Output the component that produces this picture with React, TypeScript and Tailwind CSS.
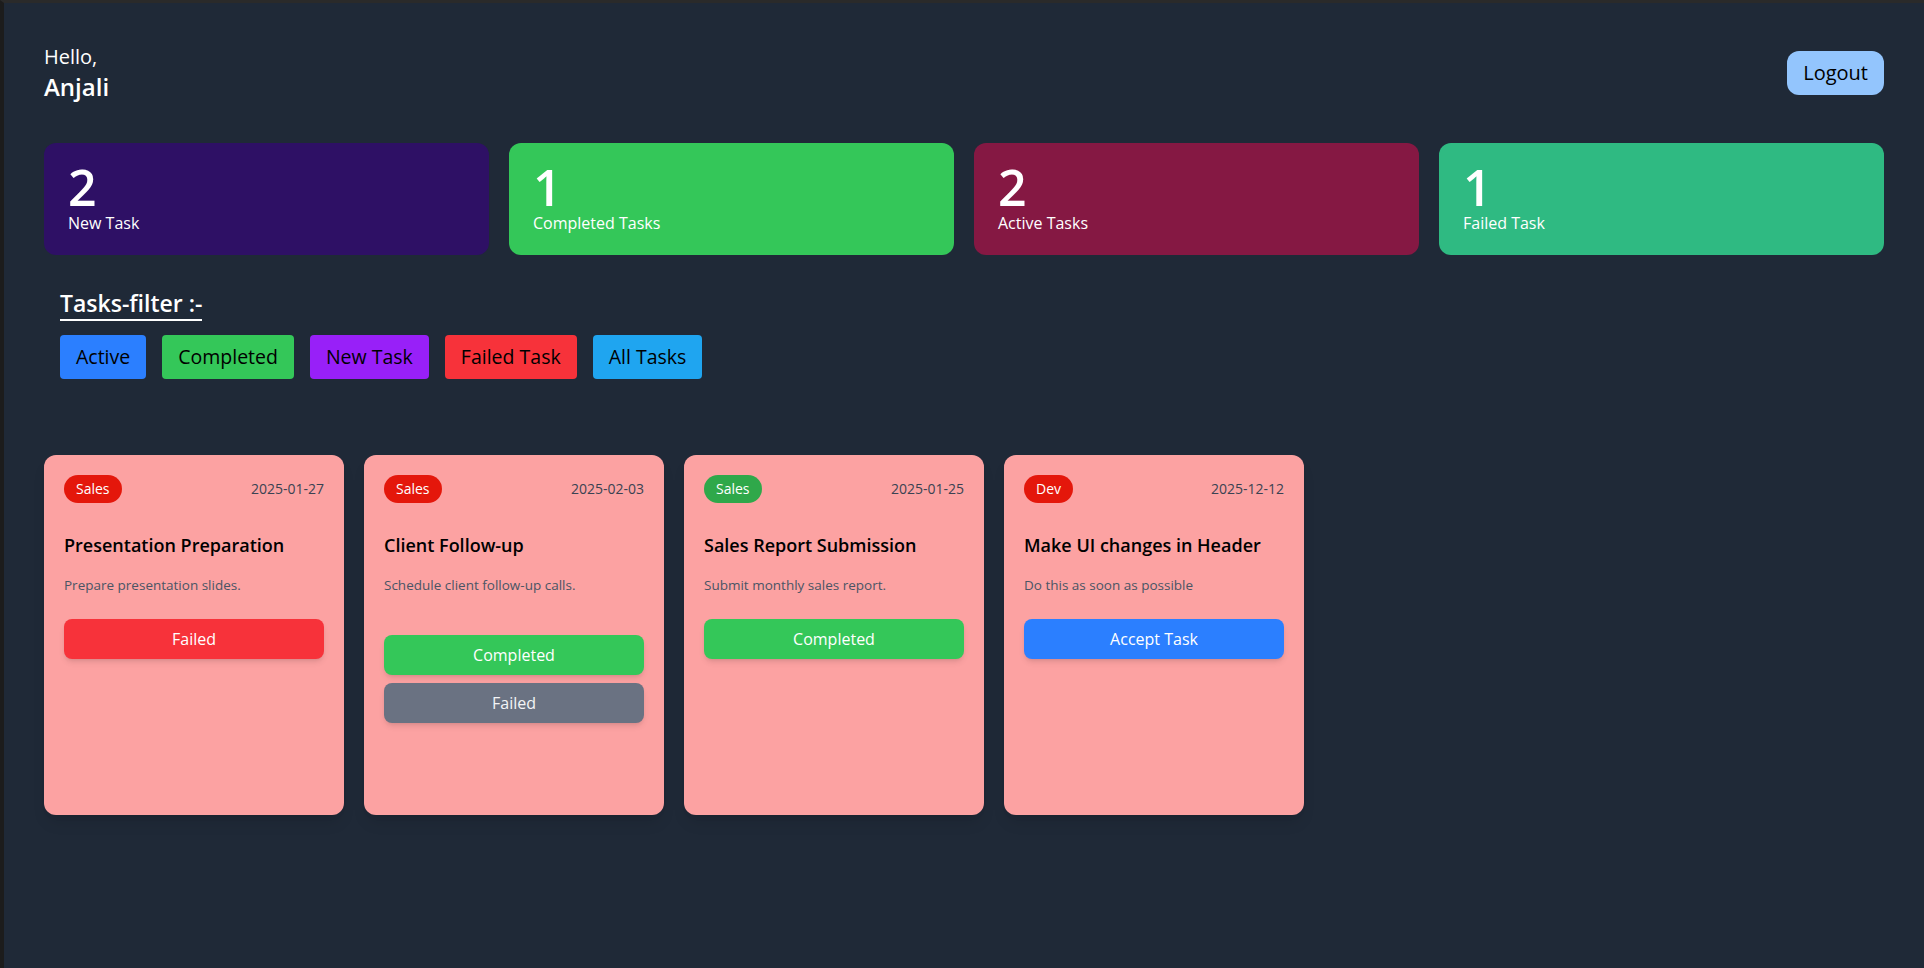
import React from "react"

type Task = {
  category: string
  badge: string
  date: string
  title: string
  description: string
  actions: { label: string; className: string }[]
  actionsTop: string
}

const stats = [
  { count: 2, label: "New Task", color: "bg-[#2e1065]" },
  { count: 1, label: "Completed Tasks", color: "bg-[#34c759]" },
  { count: 2, label: "Active Tasks", color: "bg-[#851843]" },
  { count: 1, label: "Failed Task", color: "bg-[#2fba82]" },
]

const filters = [
  { label: "Active", color: "bg-[#2b7fff]" },
  { label: "Completed", color: "bg-[#34c759]" },
  { label: "New Task", color: "bg-[#9820f8]" },
  { label: "Failed Task", color: "bg-[#f7323a]" },
  { label: "All Tasks", color: "bg-[#1fa5f0]" },
]

const tasks: Task[] = [
  {
    category: "Sales",
    badge: "bg-[#e4170b]",
    date: "2025-01-27",
    title: "Presentation Preparation",
    description: "Prepare presentation slides.",
    actionsTop: "mt-6",
    actions: [{ label: "Failed", className: "bg-[#f7323a] text-white" }],
  },
  {
    category: "Sales",
    badge: "bg-[#e4170b]",
    date: "2025-02-03",
    title: "Client Follow-up",
    description: "Schedule client follow-up calls.",
    actionsTop: "mt-10",
    actions: [
      { label: "Completed", className: "bg-[#34c759] text-white" },
      { label: "Failed", className: "bg-[#6a7282] text-gray-100" },
    ],
  },
  {
    category: "Sales",
    badge: "bg-[#2fa84a]",
    date: "2025-01-25",
    title: "Sales Report Submission",
    description: "Submit monthly sales report.",
    actionsTop: "mt-6",
    actions: [{ label: "Completed", className: "bg-[#34c759] text-white" }],
  },
  {
    category: "Dev",
    badge: "bg-[#e4170b]",
    date: "2025-12-12",
    title: "Make UI changes in Header",
    description: "Do this as soon as possible",
    actionsTop: "mt-6",
    actions: [{ label: "Accept Task", className: "bg-[#2b7fff] text-white" }],
  },
]

function TaskCard({ task }: { task: Task }) {
  return (
    <div className="w-[300px] h-[360px] shrink-0 rounded-xl bg-[#fca2a2] p-5 shadow-lg">
      <div className="flex items-center justify-between">
        <span className={`${task.badge} rounded-full px-3 py-1 text-sm text-white`}>
          {task.category}
        </span>
        <span className="text-sm text-[#3a4252]">{task.date}</span>
      </div>
      <h2 className="mt-7 text-lg font-semibold text-black">{task.title}</h2>
      <p className="mt-4 text-[13.5px] leading-5 text-[#4a5565]">{task.description}</p>
      <div className={`${task.actionsTop} flex flex-col gap-2`}>
        {task.actions.map((a) => (
          <button
            key={a.label}
            className={`${a.className} w-full rounded-lg py-2 text-base shadow-md`}
          >
            {a.label}
          </button>
        ))}
      </div>
    </div>
  )
}

export default function App() {
  return (
    <div className="min-h-screen bg-[#1f2937] border-t-[3px] border-t-[#2a2a2a] border-l-[4px] border-l-[#1c1c1c] p-10 font-['Open_Sans',sans-serif] text-white">
      {/* Header */}
      <header className="flex items-center justify-between">
        <div>
          <p className="text-xl">Hello,</p>
          <p className="text-2xl font-semibold">Anjali</p>
        </div>
        <button className="rounded-xl bg-[#93c5fd] px-4 py-2 text-xl text-black">
          Logout
        </button>
      </header>

      {/* Stats */}
      <div className="mt-10 grid grid-cols-4 gap-5">
        {stats.map((s) => (
          <div key={s.label} className={`${s.color} rounded-xl px-6 py-5`}>
            <div className="text-[50px] leading-[48px] font-semibold">{s.count}</div>
            <div className="text-base">{s.label}</div>
          </div>
        ))}
      </div>

      {/* Filters */}
      <div className="mt-8 px-4">
        <h2 className="inline-block border-b-2 border-white text-[23px] leading-8 font-semibold">
          Tasks-filter :-
        </h2>
        <div className="mt-3.5 flex gap-4">
          {filters.map((f) => (
            <button
              key={f.label}
              className={`${f.color} rounded px-4 py-2 text-[19.5px] leading-7 text-black`}
            >
              {f.label}
            </button>
          ))}
        </div>
      </div>

      {/* Tasks */}
      <div className="mt-19 flex gap-5">
        {tasks.map((t) => (
          <TaskCard key={t.title} task={t} />
        ))}
      </div>
    </div>
  )
}
